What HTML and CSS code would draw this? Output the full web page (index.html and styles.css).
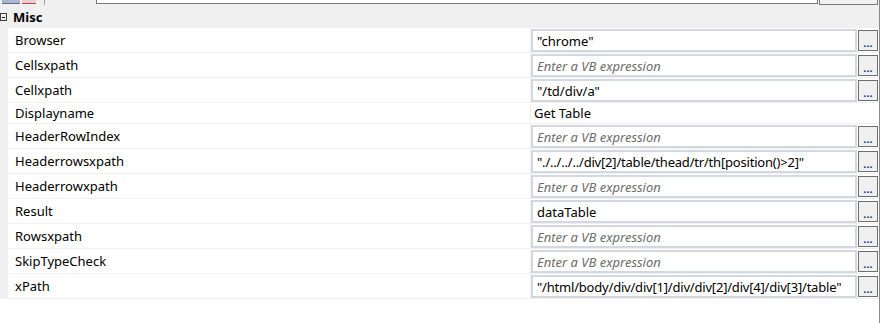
FILE: index.html
```
<!DOCTYPE html>
<html lang="en">
<head>
    <meta charset="UTF-8">
    <title>Properties</title>
    <link rel="stylesheet" href="styles.css">
</head>
<body>
    <div class="panel">
        <!-- toolbar remains at the very top -->
        <div class="toolbar">
            <span class="tool tool-a"></span>
            <span class="tool tool-b"></span>
            <span class="tool-sep"></span>
            <span class="search"></span>
            <span class="small-box"></span>
        </div>

        <!-- category header -->
        <div class="category">
            <span class="collapse"></span>
            <span class="category-name">Misc</span>
        </div>

        <div class="rows">
            <div class="row">
                <div class="gutter"></div>
                <div class="name">Browser</div>
                <div class="value">
                    <div class="box">"chrome"</div>
                    <button class="more">...</button>
                </div>
            </div>
            <div class="row">
                <div class="gutter"></div>
                <div class="name">Cellsxpath</div>
                <div class="value">
                    <div class="box empty">Enter a VB expression</div>
                    <button class="more">...</button>
                </div>
            </div>
            <div class="row">
                <div class="gutter"></div>
                <div class="name">Cellxpath</div>
                <div class="value">
                    <div class="box">"/td/div/a"</div>
                    <button class="more">...</button>
                </div>
            </div>
            <div class="row short">
                <div class="gutter"></div>
                <div class="name">Displayname</div>
                <div class="value plain">Get Table</div>
            </div>
            <div class="row">
                <div class="gutter"></div>
                <div class="name">HeaderRowIndex</div>
                <div class="value">
                    <div class="box empty">Enter a VB expression</div>
                    <button class="more">...</button>
                </div>
            </div>
            <div class="row">
                <div class="gutter"></div>
                <div class="name">Headerrowsxpath</div>
                <div class="value">
                    <div class="box narrow">"./../../../div[2]/table/thead/tr/th[position()&gt;2]"</div>
                    <button class="more">...</button>
                </div>
            </div>
            <div class="row">
                <div class="gutter"></div>
                <div class="name">Headerrowxpath</div>
                <div class="value">
                    <div class="box empty">Enter a VB expression</div>
                    <button class="more">...</button>
                </div>
            </div>
            <div class="row">
                <div class="gutter"></div>
                <div class="name">Result</div>
                <div class="value">
                    <div class="box">dataTable</div>
                    <button class="more">...</button>
                </div>
            </div>
            <div class="row">
                <div class="gutter"></div>
                <div class="name">Rowsxpath</div>
                <div class="value">
                    <div class="box empty">Enter a VB expression</div>
                    <button class="more">...</button>
                </div>
            </div>
            <div class="row">
                <div class="gutter"></div>
                <div class="name">SkipTypeCheck</div>
                <div class="value">
                    <div class="box empty">Enter a VB expression</div>
                    <button class="more">...</button>
                </div>
            </div>
            <div class="row">
                <div class="gutter"></div>
                <div class="name">xPath</div>
                <div class="value">
                    <div class="box narrow">"/html/body/div/div[1]/div/div[2]/div[4]/div[3]/table"</div>
                    <button class="more">...</button>
                </div>
            </div>
        </div>
    </div>
</body>
</html>
```

FILE: styles.css
```
body {
    margin: 0;
    background: #ffffff;
    font-family: "Noto Sans", "Open Sans", sans-serif;
    font-size: 13px;
    color: #000000;
}
.panel {
    width: 879px;
    height: 323px;
    border-right: 1px solid #8a8a8a;
    background: #ffffff;
}
.toolbar {
    height: 5px;
    display: flex;
    align-items: flex-start;
    background: #f0f0f0;
    overflow: hidden;
}
.tool {
    width: 18px;
    height: 3px;
    margin-left: 2px;
}
.tool-a {
    background: #a9b8d0;
    border-bottom: 1px solid #5a6e98;
}
.tool-b {
    width: 14px;
    background: #e6d0d0;
    border-bottom: 1px solid #c84040;
}
.tool-sep {
    width: 1px;
    height: 5px;
    margin-left: 8px;
    background: #a0a0a0;
}
.search {
    width: 720px;
    height: 3px;
    margin-left: 51px;
    background: #ffffff;
    border-left: 1px solid #7a7a7a;
    border-right: 1px solid #7a7a7a;
    border-bottom: 1px solid #7a7a7a;
}
.small-box {
    width: 57px;
    height: 4px;
    margin-left: 1px;
    background: #f0f0f0;
    border-left: 1px solid #7a7a7a;
    border-right: 1px solid #7a7a7a;
    border-bottom: 1px solid #7a7a7a;
}
.category {
    height: 23px;
    display: flex;
    align-items: center;
    background: #f0f0f0;
}
.collapse {
    width: 7px;
    height: 8px;
    margin-left: 0;
    border: 1px solid #404040;
    box-sizing: border-box;
    position: relative;
}
.collapse::after {
    content: "";
    position: absolute;
    left: 1px;
    right: 1px;
    top: 3px;
    height: 1px;
    background: #202020;
}
.category-name {
    margin-left: 6px;
    font-weight: bold;
}
.row {
    display: flex;
    height: 24px;
    border-bottom: 1px solid #f0f0f0;
}
.row.short {
    height: 20px;
}
.gutter {
    width: 8px;
    background: #f0f0f0;
}
.name {
    width: 523px;
    padding-left: 7px;
    box-sizing: border-box;
    border-right: 1px solid #f0f0f0;
    display: flex;
    align-items: center;
}
.value {
    flex: 1;
    display: flex;
    align-items: flex-start;
    padding-top: 1px;
}
.value.plain {
    padding: 0 0 0 3px;
    align-items: center;
}
.box {
    width: 326px;
    height: 23px;
    box-sizing: border-box;
    border: 2px solid #d3d7e2;
    padding: 0 4px;
    display: flex;
    align-items: center;
    white-space: nowrap;
    overflow: hidden;
}
.box.narrow {
    letter-spacing: -0.2px;
}
.box.empty {
    color: #6d6d6d;
    font-style: italic;
}
.more {
    width: 20px;
    height: 21px;
    margin: 1px 0 0 1px;
    padding: 0;
    border: 1px solid #6f6f6f;
    background: #f0f0f0;
    font-family: inherit;
    font-size: 11px;
    font-weight: bold;
    line-height: 14px;
    color: #1a3c80;
    display: flex;
    align-items: flex-end;
    justify-content: center;
}
```
